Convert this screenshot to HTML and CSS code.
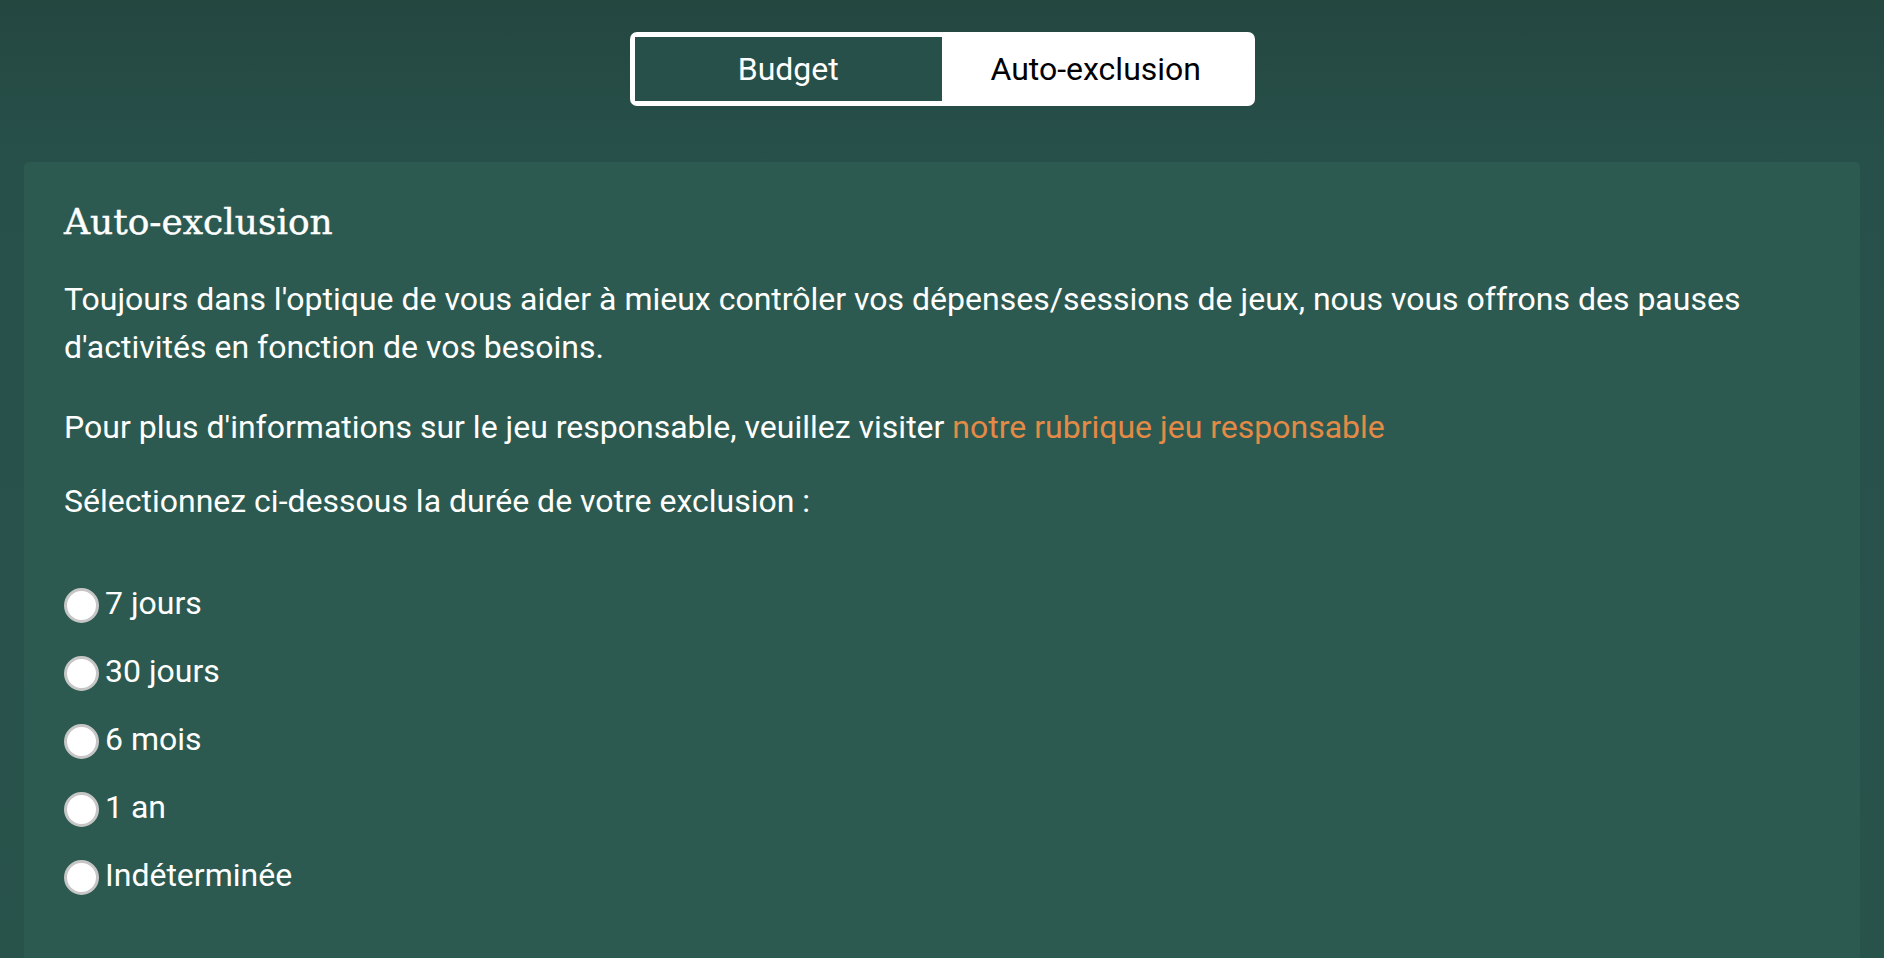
FILE: index.html
```html
<!DOCTYPE html>
<html lang="fr">
<head>
<meta charset="utf-8">
<title>Auto-exclusion</title>
<link rel="stylesheet" href="styles.css">
</head>
<body>
<div class="page">
  <nav class="tabs">
    <button class="tab tab-active">Budget</button>
    <button class="tab">Auto-exclusion</button>
  </nav>
  <section class="card">
    <h2 class="card-title">Auto-exclusion</h2>
    <p class="text text-intro">Toujours dans l'optique de vous aider à mieux contrôler vos dépenses/sessions de jeux, nous vous offrons des pauses d'activités en fonction de vos besoins.</p>
    <p class="text">Pour plus d'informations sur le jeu responsable, veuillez visiter <a class="link" href="#">notre rubrique jeu responsable</a></p>
    <p class="text">Sélectionnez ci-dessous la durée de votre exclusion :</p>
    <ul class="options">
      <li class="option"><span class="radio"></span><span>7 jours</span></li>
      <li class="option"><span class="radio"></span><span>30 jours</span></li>
      <li class="option"><span class="radio"></span><span>6 mois</span></li>
      <li class="option"><span class="radio"></span><span>1 an</span></li>
      <li class="option"><span class="radio"></span><span>Indéterminée</span></li>
    </ul>
  </section>
</div>
</body>
</html>
```

FILE: styles.css
```css
html, body {
  margin: 0;
  padding: 0;
  height: 100%;
}
body {
  background: linear-gradient(180deg, #244740 0px, #27504a 160px, #28534b 100%);
  font-family: Roboto, "Noto Sans", sans-serif;
  color: #ffffff;
  overflow: hidden;
}
.page {
  padding: 32px 24px 0;
}
.tabs {
  display: flex;
  width: 615px;
  margin: 0 auto;
  padding: 5px 5px;
  background: #ffffff;
  border-radius: 7px;
}
.tab {
  flex: 1 1 0;
  height: 64px;
  border: 0;
  background: transparent;
  font-family: Roboto, sans-serif;
  font-size: 32px;
  color: #000000;
  padding: 0;
}
.tab-active {
  background: #28504a;
  color: #ffffff;
}
.card {
  margin-top: 56px;
  background: #2d5a50;
  border-radius: 5px;
  padding: 36px 40px 60px;
  min-height: 800px;
}
.card-title {
  margin: 0 0 29px;
  font-family: "DejaVu Serif", serif;
  font-weight: normal;
  font-size: 36px;
  line-height: 48px;
  -webkit-text-stroke: 0.4px #ffffff;
}
.text {
  margin: 0 0 26px;
  font-size: 32px;
  line-height: 48px;
}
.text-intro {
  margin-bottom: 32px;
}
.link {
  color: #e38a47;
  text-decoration: none;
}
.options {
  list-style: none;
  margin: 44px 0 0;
  padding: 0;
}
.option {
  display: flex;
  align-items: center;
  gap: 6px;
  height: 68px;
  font-size: 32px;
}
.radio {
  width: 29px;
  height: 29px;
  margin-top: 5px;
  border-radius: 50%;
  background: #ffffff;
  border: 3px solid #c6c6c6;
}
```
